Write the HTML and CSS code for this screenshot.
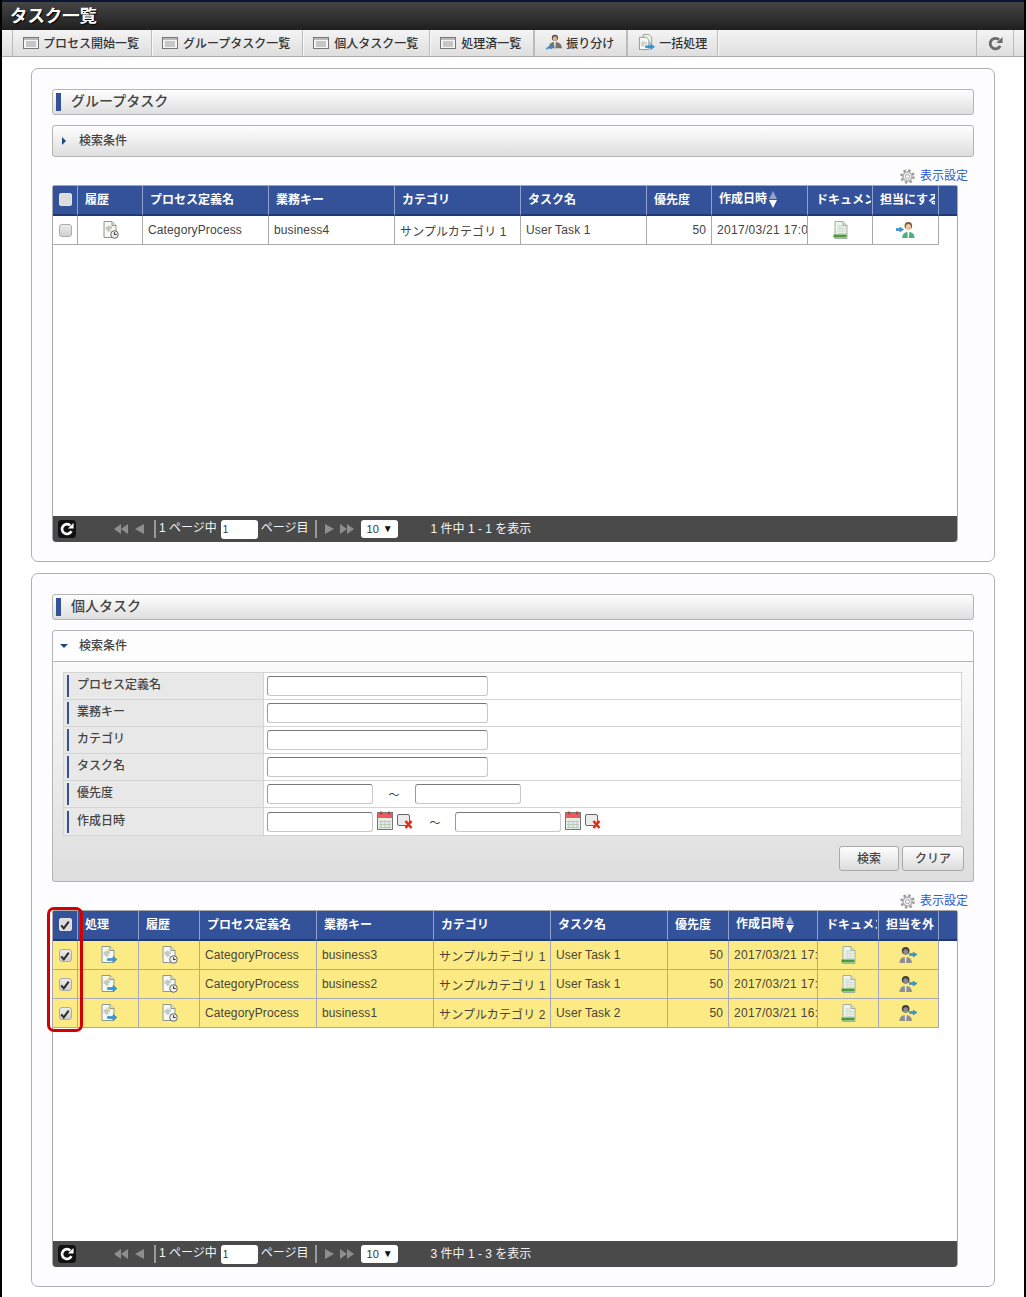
FILE: index.html
```html
<!DOCTYPE html>
<html lang="ja">
<head>
<meta charset="utf-8">
<title>タスク一覧</title>
<link rel="stylesheet" href="styles.css">
</head>
<body>
<svg class="defs" width="0" height="0" aria-hidden="true">
  <symbol id="i-list" viewBox="0 0 16 14"><rect x=".5" y="1.500" width="15" height="11" fill="#f4f4f4" stroke="#777"/><rect x="1" y="2" width="14" height="2" fill="#bbb"/><path d="M3 6h10M3 8h10M3 10h10" stroke="#999"/></symbol>
  <symbol id="i-history" viewBox="0 0 18 18"><path d="M2.500 .5h8l4 4v12h-12z" fill="#f6f8f2" stroke="#8d988d"/><path d="M10.500 .5v4h4" fill="#dfe5d8" stroke="#8d988d"/><path d="M4 6.500l3-2 1.500 1 2-.5v2.500l-2 1 1 1.500-3 1-1-2-1.500-.5z" fill="#c4c9c3"/><circle cx="13" cy="13.500" r="3.800" fill="#ececec" stroke="#666"/><path d="M13 11.200v2.300h2.200" fill="none" stroke="#333"/></symbol>
  <symbol id="i-process" viewBox="0 0 18 18"><path d="M2.500 .5h8l4 4v12h-12z" fill="#f6f8f2" stroke="#8d988d"/><path d="M10.500 .5v4h4" fill="#dfe5d8" stroke="#8d988d"/><path d="M4 6.500l3-2 1.500 1 2-.5v2.500l-2 1 1 1.500-3 1-1-2-1.500-.5z" fill="#c4c9c3"/><circle cx="9" cy="4" r="1" fill="#e8c840"/><path d="M8 12.500h5.500V10.500l4 3-4 3v-2H8z" fill="#2f9be0" stroke="#1670b0" stroke-width=".5"/></symbol>
  <symbol id="i-doc" viewBox="0 0 14 18"><path d="M1.500 .5h8l4 4v13h-12z" fill="#eef3ea" stroke="#a3aea3"/><path d="M9.500 .5v4h4" fill="#d6ddd0" stroke="#a3aea3"/><path d="M4 5h5M4 7.500h8M4 10h8M4 12.500h8" stroke="#c9d4c9"/><path d="M6 5v8M9 5v8" stroke="#d8e0d8"/><rect x="0" y="13.500" width="13" height="3" fill="#4a9a3a"/></symbol>
  <symbol id="i-assign" viewBox="0 0 20 18"><circle cx="13" cy="4.500" r="4" fill="#7a5a42"/><ellipse cx="13" cy="5.800" rx="2.800" ry="3" fill="#f0c8a0"/><path d="M6.500 17.500c0-5 3-6.500 6.500-6.500s6.500 1.500 6.500 6.500z" fill="#4fae80"/><path d="M12 11h2l-.5 6.500h-1z" fill="#fff"/><path d="M0 7.500h4V6l4 2.500L4 11V9.500H0z" fill="#2f9be0" stroke="#1670b0" stroke-width=".5"/></symbol>
  <symbol id="i-unassign" viewBox="0 0 20 18"><circle cx="7" cy="4.500" r="4" fill="#3f3f3f"/><ellipse cx="7" cy="5.800" rx="2.600" ry="2.800" fill="#8b8b8b"/><path d="M.5 17.500c0-5 3-6.500 6.500-6.500s6.500 1.500 6.500 6.500z" fill="#8f8f8f"/><path d="M6 11h2l-.5 6.500h-1z" fill="#eee"/><path d="M11 7.500h4V6l4 2.500-4 2.500V9.500h-4z" fill="#2f9be0" stroke="#1670b0" stroke-width=".5"/></symbol>
  <symbol id="i-route" viewBox="0 0 18 18"><circle cx="10.500" cy="4" r="3.300" fill="#5a4638"/><ellipse cx="10.500" cy="5" rx="2.200" ry="2.500" fill="#dcb48f"/><path d="M4 15c0-5 3-6.500 6.500-6.500s7 1.500 7.500 6.500z" fill="#77726c"/><path d="M9.500 8.500h2l-.5 6h-1z" fill="#eee"/><path d="M1 17c0-2.500 2-4 5-4v-1.500l3.500 2.500L6 16.500V15c-2 0-3.500.8-5 2z" fill="#2f88d8"/></symbol>
  <symbol id="i-batch" viewBox="0 0 18 18"><path d="M5.500 .5h6l3 3v6h-9z" fill="#eef1ea" stroke="#93a093"/><path d="M1.500 3.500h7l3 3v10h-10z" fill="#f6f8f2" stroke="#8d988d"/><path d="M3 9l2.500-2 2 2 2-1v2.500l-2 1-2 2-2.500-1z" fill="#cfd5cf"/><path d="M8 12.500h5.500V10.500l4 3-4 3v-2H8z" fill="#2f9be0" stroke="#1670b0" stroke-width=".5"/></symbol>
  <symbol id="i-gear" viewBox="0 0 16 16"><circle cx="8" cy="8" r="6" fill="none" stroke="#999" stroke-width="3.500" stroke-dasharray="2.400 2.310"/><circle cx="8" cy="8" r="4.700" fill="none" stroke="#b5b5b5" stroke-width="2"/><circle cx="8" cy="8" r="2.200" fill="#fff" stroke="#999"/></symbol>
  <symbol id="i-cal" viewBox="0 0 16 19"><rect x=".5" y="1.500" width="15" height="17" fill="#e5ede5" stroke="#777"/><rect x="1" y="2" width="14" height="5" fill="#ec5a60"/><path d="M4 9.500v8M8 9.500v8M12 9.500v8M2 10.500h12M2 13.500h12M2 16.500h12" stroke="#b9c9bd"/><path d="M4 .5v3M12 .5v3" stroke="#a33" stroke-width="1.500"/></symbol>
  <symbol id="i-clear" viewBox="0 0 18 16"><rect x=".5" y=".5" width="12" height="11" rx="1.500" fill="#ececec" stroke="#666"/><path d="M8.500 7l6 7M14.500 7l-6 7" stroke="#e52a10" stroke-width="2.600"/></symbol>
  <symbol id="i-reload" viewBox="0 0 16 16"><path d="M13 10.500A5.600 5.600 0 1 1 11.800 4" fill="none" stroke="currentColor" stroke-width="3"/><path d="M9 7.500h6.500V1z" fill="currentColor"/></symbol>
  <symbol id="i-check" viewBox="0 0 12 12"><path d="M1.500 6.500l3 3.500L10.500 2" fill="none" stroke="#2a2a2a" stroke-width="2.400"/></symbol>
</svg>

<div class="page">
  <header class="titlebar"><h1>タスク一覧</h1></header>

  <nav class="toolbar">
    <a class="tool tool-1"><svg class="ico-list"><use href="#i-list"/></svg>プロセス開始一覧</a>
    <a class="tool tool-2"><svg class="ico-list"><use href="#i-list"/></svg>グループタスク一覧</a>
    <a class="tool"><svg class="ico-list"><use href="#i-list"/></svg>個人タスク一覧</a>
    <a class="tool tool-4"><svg class="ico-list"><use href="#i-list"/></svg>処理済一覧</a>
    <a class="tool tool-5"><svg class="ico-route"><use href="#i-route"/></svg>振り分け</a>
    <a class="tool tool-6"><svg class="ico-route"><use href="#i-batch"/></svg>一括処理</a>
    <a class="tool-reload"><svg class="ico-reload"><use href="#i-reload"/></svg></a>
  </nav>

  <main class="content">
    <section class="panel">
      <h2 class="section-title">グループタスク</h2>
      <div class="accordion-head"><span class="arrow-right"></span><span class="head-text">検索条件</span></div>
      <div class="settings"><svg class="ico-gear"><use href="#i-gear"/></svg><a>表示設定</a></div>
      <div class="grid">
        <table class="grid-table">
          <colgroup>
            <col class="w25"><col class="w65"><col class="w126"><col class="w126"><col class="w126"><col class="w126"><col class="w65"><col class="w96"><col class="w65"><col class="w66"><col>
          </colgroup>
          <thead>
            <tr>
              <th class="center"><span class="cb head"></span></th>
              <th>履歴</th><th>プロセス定義名</th><th>業務キー</th><th>カテゴリ</th><th>タスク名</th><th>優先度</th>
              <th>作成日時<span class="sort"><i class="up"></i><i class="down"></i></span></th>
              <th class="cut-doc"><div class="clip">ドキュメント</div></th><th class="cut-user"><div class="clip">担当にする</div></th><th class="filler"></th>
            </tr>
          </thead>
          <tbody>
            <tr>
              <td class="center"><span class="cb"></span></td>
              <td class="center"><svg class="ico-cell"><use href="#i-history"/></svg></td>
              <td>CategoryProcess</td><td>business4</td><td>サンプルカテゴリ 1</td><td>User Task 1</td><td class="num">50</td><td class="date">2017/03/21 17:00</td>
              <td class="center"><svg class="ico-cell"><use href="#i-doc"/></svg></td>
              <td class="center"><svg class="ico-cell"><use href="#i-assign"/></svg></td>
              <td class="filler-body"></td>
            </tr>
          </tbody>
        </table>
        <div class="pager">
          <button class="pager-reload"><svg class="ico-pager-reload"><use href="#i-reload"/></svg></button>
          <span class="tri-first"><i class="tl"></i><i class="tl"></i></span>
          <i class="tl tri-prev"></i>
          <span class="sep sep-a"></span>
          <span class="pager-text">1 ページ中</span>
          <span class="page-input">1</span>
          <span class="pager-text">ページ目</span>
          <span class="sep sep-b"></span>
          <i class="tr tri-next"></i>
          <span class="tri-last"><i class="tr"></i><i class="tr"></i></span>
          <span class="page-size">10<b class="size-arrow">▼</b></span>
          <span class="pager-info">1 件中 1 - 1 を表示</span>
        </div>
      </div>
    </section>

    <section class="panel">
      <h2 class="section-title">個人タスク</h2>
      <div class="accordion">
        <div class="accordion-head open"><span class="arrow-down"></span><span class="head-text">検索条件</span></div>
        <div class="accordion-body">
          <table class="form">
            <tr><th><span>プロセス定義名</span></th><td><span class="input long"></span></td></tr>
            <tr><th><span>業務キー</span></th><td><span class="input long"></span></td></tr>
            <tr><th><span>カテゴリ</span></th><td><span class="input long"></span></td></tr>
            <tr><th><span>タスク名</span></th><td><span class="input long"></span></td></tr>
            <tr><th><span>優先度</span></th><td><div class="range"><span class="input short"></span><span class="tilde">～</span><span class="input short"></span></div></td></tr>
            <tr><th><span>作成日時</span></th><td><div class="range">
              <span class="input short"></span><svg class="ico-cal"><use href="#i-cal"/></svg><svg class="ico-clear"><use href="#i-clear"/></svg>
              <span class="tilde tilde-date">～</span>
              <span class="input short"></span><svg class="ico-cal"><use href="#i-cal"/></svg><svg class="ico-clear"><use href="#i-clear"/></svg>
            </div></td></tr>
          </table>
          <div class="form-actions"><button class="btn btn-search">検索</button><button class="btn btn-clear">クリア</button></div>
        </div>
      </div>
      <div class="settings"><svg class="ico-gear"><use href="#i-gear"/></svg><a>表示設定</a></div>
      <div class="grid">
        <div class="highlight"></div>
        <table class="grid-table rows-yellow">
          <colgroup>
            <col class="w25"><col class="w61"><col class="w61"><col class="w117"><col class="w117"><col class="w117"><col class="w117"><col class="w61"><col class="w89"><col class="w61"><col class="w60"><col>
          </colgroup>
          <thead>
            <tr>
              <th class="center"><span class="cb head"><svg class="ico-check"><use href="#i-check"/></svg></span></th>
              <th>処理</th><th>履歴</th><th>プロセス定義名</th><th>業務キー</th><th>カテゴリ</th><th>タスク名</th><th>優先度</th>
              <th>作成日時<span class="sort"><i class="up"></i><i class="down"></i></span></th>
              <th class="cut-doc"><div class="clip">ドキュメント</div></th><th class="cut-user"><div class="clip">担当を外す</div></th><th class="filler"></th>
            </tr>
          </thead>
          <tbody>
            <tr>
              <td class="center"><span class="cb"><svg class="ico-check"><use href="#i-check"/></svg></span></td>
              <td class="center"><svg class="ico-cell"><use href="#i-process"/></svg></td>
              <td class="center"><svg class="ico-cell"><use href="#i-history"/></svg></td>
              <td>CategoryProcess</td><td>business3</td><td>サンプルカテゴリ 1</td><td>User Task 1</td><td class="num">50</td><td class="date">2017/03/21 17:00</td>
              <td class="center"><svg class="ico-cell"><use href="#i-doc"/></svg></td>
              <td class="center"><svg class="ico-cell"><use href="#i-unassign"/></svg></td>
              <td class="filler-body"></td>
            </tr>
            <tr>
              <td class="center"><span class="cb"><svg class="ico-check"><use href="#i-check"/></svg></span></td>
              <td class="center"><svg class="ico-cell"><use href="#i-process"/></svg></td>
              <td class="center"><svg class="ico-cell"><use href="#i-history"/></svg></td>
              <td>CategoryProcess</td><td>business2</td><td>サンプルカテゴリ 1</td><td>User Task 1</td><td class="num">50</td><td class="date">2017/03/21 17:00</td>
              <td class="center"><svg class="ico-cell"><use href="#i-doc"/></svg></td>
              <td class="center"><svg class="ico-cell"><use href="#i-unassign"/></svg></td>
              <td class="filler-body"></td>
            </tr>
            <tr>
              <td class="center"><span class="cb"><svg class="ico-check"><use href="#i-check"/></svg></span></td>
              <td class="center"><svg class="ico-cell"><use href="#i-process"/></svg></td>
              <td class="center"><svg class="ico-cell"><use href="#i-history"/></svg></td>
              <td>CategoryProcess</td><td>business1</td><td>サンプルカテゴリ 2</td><td>User Task 2</td><td class="num">50</td><td class="date">2017/03/21 16:00</td>
              <td class="center"><svg class="ico-cell"><use href="#i-doc"/></svg></td>
              <td class="center"><svg class="ico-cell"><use href="#i-unassign"/></svg></td>
              <td class="filler-body"></td>
            </tr>
          </tbody>
        </table>
        <div class="pager">
          <button class="pager-reload"><svg class="ico-pager-reload"><use href="#i-reload"/></svg></button>
          <span class="tri-first"><i class="tl"></i><i class="tl"></i></span>
          <i class="tl tri-prev"></i>
          <span class="sep sep-a"></span>
          <span class="pager-text">1 ページ中</span>
          <span class="page-input">1</span>
          <span class="pager-text">ページ目</span>
          <span class="sep sep-b"></span>
          <i class="tr tri-next"></i>
          <span class="tri-last"><i class="tr"></i><i class="tr"></i></span>
          <span class="page-size">10<b class="size-arrow">▼</b></span>
          <span class="pager-info">3 件中 1 - 3 を表示</span>
        </div>
      </div>
    </section>
  </main>
</div>
</body>
</html>
```

FILE: styles.css
```css
* { box-sizing: border-box; }
html, body { margin: 0; padding: 0; }
body {
  font-family: "Liberation Sans", "Noto Sans CJK JP", sans-serif;
  font-size: 12px;
  color: #333;
  background: #000;
}
.defs { position: absolute; }
.page {
  width: 1022px;
  height: 1295px;
  margin: 2px 2px 0 2px;
  background: #fff;
  overflow: hidden;
  box-shadow: 0 -2px 0 #0b1433;
}

.titlebar {
  height: 28px;
  background: linear-gradient(#454545, #1f1f1f);
  display: flex;
  align-items: center;
  padding-left: 8px;
}
.titlebar h1 {
  margin: 0;
  font-size: 17.4px;
  line-height: 28px;
  font-weight: bold;
  color: #fff;
  text-shadow: 1px 1px 1px #000;
}

.toolbar {
  height: 27px;
  display: flex;
  padding-left: 10px;
  background: linear-gradient(#f4f4f4, #dedede);
  border-bottom: 1px solid #aaa;
}
.tool {
  display: flex;
  align-items: center;
  height: 26px;
  padding: 0 11px 1px 10px;
  font-weight: 500;
  color: #333;
  border-right: 1px solid #bbb;
  box-shadow: 1px 0 0 #f8f8f8;
  white-space: nowrap;
}
.tool-1 { border-left: 1px solid #bbb; padding-right: 12px; }
.tool-1 .ico-list { margin-right: 4px; }
.tool-2 { padding-right: 12px; }
.tool-4 { padding-right: 12px; }
.tool-5 { padding-right: 12px; border-left: 1px solid #bbb; }
.tool-6 { padding-right: 10px; border-left: 1px solid #bbb; }
.ico-list { width: 16px; height: 14px; margin-right: 5px; }
.ico-route { width: 17px; height: 17px; margin-right: 4px; }
.tool-reload {
  margin-left: auto;
  margin-right: 10px;
  width: 38px;
  height: 26px;
  display: flex;
  align-items: center;
  justify-content: center;
  border-left: 1px solid #bbb;
  border-right: 1px solid #bbb;
}
.ico-reload { width: 15px; height: 15px; color: #6a6a6a; }

.content {
  padding: 11px 29px 0 29px;
  display: flex;
  flex-direction: column;
  gap: 11px;
}
.panel {
  border: 1px solid #b0b0b0;
  border-radius: 7px;
  background: #fdfdff;
  padding: 20px 20px 19px 20px;
}
.section-title {
  margin: 0 0 10px;
  height: 26px;
  padding-bottom: 2px;
  border: 1px solid #b4b4b4;
  border-radius: 3px;
  background: linear-gradient(#fefefe, #dedede);
  font-size: 14px;
  font-weight: 500;
  line-height: 22px;
  color: #444;
  display: flex;
  align-items: center;
}
.section-title::before {
  content: "";
  width: 5px;
  height: 18px;
  margin: 2px 10px 0 3px;
  background: #335299;
}
.accordion-head {
  height: 32px;
  border: 1px solid #b4b4b4;
  border-radius: 3px;
  background: linear-gradient(#fefefe, #dedede);
  display: flex;
  align-items: center;
  font-weight: 500;
  color: #444;
}
.head-text { padding-bottom: 1px; line-height: 16px; }
.accordion-head.open {
  border-radius: 3px 3px 0 0;
  background: #fdfdfd;
}
.arrow-right {
  width: 0; height: 0;
  margin: 0 13px 0 9px;
  border-left: 4px solid #1f4a7a;
  border-top: 4px solid transparent;
  border-bottom: 4px solid transparent;
}
.arrow-down {
  width: 0; height: 0;
  margin: 0 11px 0 7px;
  border-top: 4px solid #1f4a7a;
  border-left: 4px solid transparent;
  border-right: 4px solid transparent;
}
.accordion-body {
  height: 220px;
  border: 1px solid #b4b4b4;
  border-top: 0;
  border-radius: 0 0 3px 3px;
  background: linear-gradient(#fafafa, #dedede);
  padding: 10px 10px 0;
}
.form {
  width: 899px;
  border-collapse: collapse;
  table-layout: fixed;
  background: #fff;
  border: 1px solid #d4d4d4;
}
.form tr { height: 27px; }
.form th {
  width: 200px;
  padding: 2px 3px;
  background: #e8e8e8;
  border: 1px solid #d4d4d4;
  font-weight: 500;
  text-align: left;
  color: #444;
}
.form th span {
  display: block;
  height: 22px;
  line-height: 20px;
  padding-left: 8px;
  border-left: 2px solid #335299;
}
.form td {
  padding: 3px;
  border: 1px solid #d4d4d4;
}
.input {
  display: block;
  height: 20px;
  background: #fff;
  border: 1px solid #c8c8c8;
  border-top-color: #777;
  border-left-color: #999;
  border-radius: 3px;
}
.long { width: 221px; }
.short { width: 106px; flex: none; }
.range { display: flex; align-items: center; }
.tilde { width: 42px; text-align: center; font-size: 11px; }
.tilde-date { width: 40px; }
.ico-cal { width: 16px; height: 19px; margin: 0 4px 2px 4px; flex: none; }
.ico-clear { width: 18px; height: 16px; margin-top: 1px; flex: none; }
.form-actions {
  display: flex;
  justify-content: flex-end;
  gap: 3px;
  margin-top: 10px;
}
.btn {
  height: 25px;
  font: inherit;
  font-weight: 500;
  font-size: 12px;
  color: #444;
  border: 1px solid #aaa;
  border-radius: 3px;
  background: linear-gradient(#fefefe, #dcdcdc);
  padding: 0 0 2px;
}
.btn-search { width: 60px; }
.btn-clear { width: 62px; margin-right: -1px; }

.settings {
  height: 28px;
  padding: 10px 6px 0 0;
  display: flex;
  justify-content: flex-end;
  align-items: center;
  gap: 5px;
  color: #2a5bd0;
  width: 922px;
}
.settings a { color: #2a5bd0; line-height: 16px; }
.ico-gear { width: 15px; height: 15px; }

.grid {
  position: relative;
  width: 906px;
  height: 357px;
  border: 1px solid #a8a8a8;
  border-bottom: 0;
  border-radius: 3px 3px 4px 4px;
  display: flex;
  flex-direction: column;
  background: #fff;
}
.highlight {
  position: absolute;
  left: -6px;
  top: -4px;
  width: 36px;
  height: 125px;
  border: 3px solid #d20000;
  border-radius: 7px;
  z-index: 2;
}
.grid-table {
  width: 100%;
  table-layout: fixed;
  border-collapse: separate;
  border-spacing: 0;
}
.w25 { width: 25px; } .w60 { width: 60px; } .w61 { width: 61px; }
.w65 { width: 65px; } .w66 { width: 66px; } .w89 { width: 89px; } .w96 { width: 96px; }
.w117 { width: 117px; } .w126 { width: 126px; }

.grid-table th {
  height: 30px;
  padding: 0 0 3px 7px;
  background: #335299;
  color: #fff;
  font-weight: bold;
  font-size: 12px;
  text-align: left;
  white-space: nowrap;
  overflow: hidden;
  border-right: 1px solid #8fa2cc;
  border-bottom: 2px solid #1e3a70;
}
.grid-table th.center { padding: 0 0 2px; text-align: center; }
.grid-table th.filler { border-right: 0; padding: 0; }
.grid-table th.cut-doc { padding: 0 1px 3px 8px; }
.grid-table th.cut-user { padding: 0 3px 3px 7px; }
.clip { overflow: hidden; }
.grid-table td {
  height: 29px;
  padding: 0 5px;
  white-space: nowrap;
  overflow: hidden;
  color: #444;
  letter-spacing: .13px;
  border-right: 1px solid #aaa;
  border-bottom: 1px solid #aaa;
}
.grid-table td.center { padding: 0; text-align: center; }
.grid-table td.num { text-align: right; }
.grid-table td.date { letter-spacing: .3px; padding-right: 0; }
.grid-table td.filler-body { border: 0; background: #fff; }
.rows-yellow td { background: #fcea85; border-color: #a8a8b8; color: #4a4436; }

.cb {
  display: inline-flex;
  align-items: center;
  justify-content: center;
  width: 13px;
  height: 13px;
  vertical-align: middle;
  border: 1px solid #aaa;
  border-radius: 3px;
  background: linear-gradient(#ececec, #cfcfcf);
}
.cb.head { background: #dcdcdc; border-color: #e4e4e4; border-radius: 2px; }
.ico-check { width: 10px; height: 10px; }
.ico-cell { width: 19px; height: 18px; vertical-align: middle; }

.sort {
  display: inline-flex;
  flex-direction: column;
  gap: 1px;
  margin-left: 2px;
  vertical-align: middle;
}
.sort .up, .sort .down { width: 0; height: 0; border-left: 4.500px solid transparent; border-right: 4.500px solid transparent; }
.sort .up { border-bottom: 8px solid #8fa2cc; }
.sort .down { border-top: 8px solid #fff; }

.pager {
  margin-top: auto;
  height: 26px;
  background: #4a4a4a;
  border-radius: 0 0 3px 3px;
  display: flex;
  align-items: center;
  color: #f4f4f4;
  padding-left: 5px;
  white-space: nowrap;
}
.pager-text { padding-bottom: 3px; line-height: 16px; }
.pager-reload {
  width: 18px;
  height: 18px;
  padding: 0;
  border: 1px solid #111;
  border-radius: 3px;
  background: #111;
  color: #fff;
  display: flex;
  align-items: center;
  justify-content: center;
}
.ico-pager-reload { width: 14px; height: 14px; }
.tl, .tr { display: block; width: 0; height: 0; border-top: 5px solid transparent; border-bottom: 5px solid transparent; }
.tl { border-right: 7px solid #8e8e8e; }
.tr { border-left: 7px solid #8e8e8e; }
.tri-first { display: flex; margin-left: 38px; }
.tri-prev { margin-left: 7px; border-right-width: 9px; }
.sep { width: 2px; height: 18px; background: #9a9a9a; }
.sep-a { margin: 0 3px 0 10px; }
.sep-b { margin: 0 8px 0 6px; }
.page-input {
  width: 37px;
  height: 19px;
  margin: 0 3px 0 4px;
  padding-left: 2px;
  background: #fff;
  color: #333;
  border-radius: 3px;
  font-size: 10px;
  line-height: 19px;
}
.tri-next { border-left-width: 9px; }
.tri-last { display: flex; margin-left: 6px; }
.page-size {
  width: 37px;
  height: 18px;
  margin-left: 7px;
  padding: 0 5px 0 6px;
  background: #fff;
  color: #333;
  border-radius: 3px;
  font-size: 11px;
  line-height: 18px;
  display: flex;
  justify-content: space-between;
}
.size-arrow { font-size: 10px; font-weight: normal; color: #111; }
.pager-info { margin-left: 33px; padding-bottom: 1px; line-height: 16px; }
```
